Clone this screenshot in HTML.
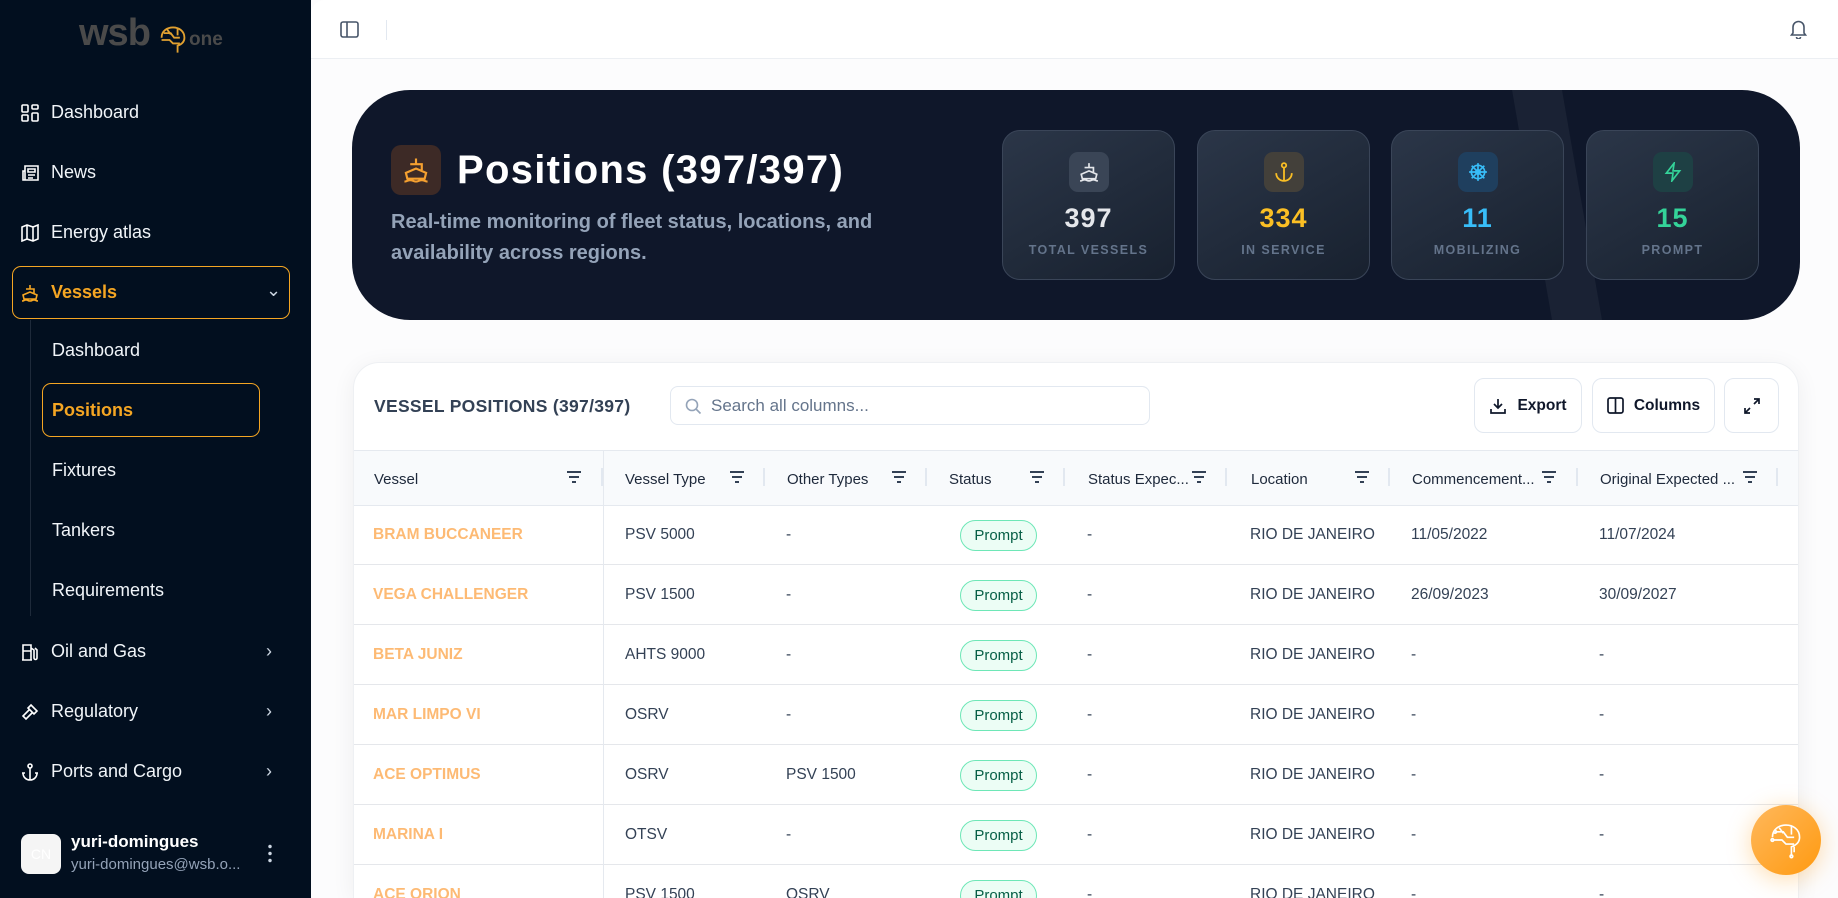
<!DOCTYPE html>
<html style="overflow:hidden;width:1838px;height:898px"><head><meta charset="utf-8"><style>
*{box-sizing:border-box;margin:0;padding:0}
body{width:1838px;height:898px;overflow:hidden;font-family:"Liberation Sans",sans-serif;background:#fcfcfd;position:relative}
.sb{position:absolute;left:0;top:0;width:311px;height:898px;background:#020f1f;color:#fff}
.nav{position:absolute;left:21px;display:flex;align-items:center;font-size:18px;color:#f1f5f9}
.nav svg{margin-right:12px}
.chev{position:absolute;left:266px;color:#cbd5e1;font-size:18px}
.sub{position:absolute;left:52px;font-size:18px;color:#f1f5f9}
.top{position:absolute;left:311px;top:0;right:0;height:59px;border-bottom:1px solid #eceff3;background:#fff;border-top-left-radius:14px}
.hero{position:absolute;left:352px;top:90px;width:1448px;height:230px;background:#0f172a;border-radius:58px;overflow:hidden}
.card{position:absolute;top:40px;width:173px;height:150px;border-radius:18px;background:linear-gradient(150deg,#2b3648,#18212f);border:1px solid #3a4558;text-align:center}
.card .ib{width:40px;height:40px;border-radius:9px;margin:21px auto 0;display:flex;align-items:center;justify-content:center}
.card .n{font-size:27px;font-weight:900;margin-top:11px;letter-spacing:1px}
.card .l{font-size:12.5px;font-weight:700;color:#64748b;letter-spacing:1.4px;margin-top:9px}
.tc{position:absolute;left:353px;top:362px;width:1446px;height:536px;background:#fff;border-radius:26px 26px 0 0;box-shadow:0 4px 24px rgba(0,0,0,.06);border:1px solid #eef0f3;border-bottom:none;overflow:hidden}
.btn{position:absolute;top:15px;height:55px;border:1px solid #e2e8f0;border-radius:10px;display:flex;align-items:center;justify-content:center;font-size:15.5px;font-weight:700;color:#0f172a;background:#fff}
.th{position:absolute;top:87px;left:0;right:0;height:56px;background:#f8fafc;border-top:1px solid #e5e9ef;border-bottom:1px solid #e5e9ef}
.h{position:absolute;top:20px;font-size:15px;color:#1e293b}
.row{position:absolute;left:0;right:0;height:60px;border-bottom:1px solid #e5e7eb}
.c{position:absolute;top:21px;font-size:15.5px;color:#334155}
.v{color:#fdba74;font-weight:700;font-size:15.5px}
.bd{position:absolute;left:606px;top:15px;width:77px;height:31px;border-radius:16px;background:#ecfdf5;border:1px solid #6ee7b7;color:#065f46;font-size:15px;display:flex;align-items:center;justify-content:center}
</style></head><body>
<div class="sb">
 <div style="position:absolute;left:79px;top:12px;font-size:38px;font-weight:900;color:#4a4a4a;letter-spacing:-1px">wsb</div>
 <svg style="position:absolute;left:157px;top:24px" width="32" height="32" viewBox="0 0 28 28" fill="none" stroke="#e0a030" stroke-width="1.6"><path d="M4 12c0-6 5-9 10-9s10 3 10 9c0 4-3 6-6 7v6M6 8h6l3 4h5M4 14h7l3 3h6M9 5l3 4M18 4v6"/></svg>
 <div style="position:absolute;left:189px;top:29px;font-size:19px;font-weight:900;color:#4a4a4a">one</div>
 <div class="nav" style="top:102px"><svg width="18" height="18" viewBox="0 0 18 18" fill="none" stroke="#fff" stroke-width="1.6"><rect x="1" y="1" width="6" height="7" rx="1"/><rect x="11" y="1" width="6" height="4" rx="1"/><rect x="1" y="11" width="6" height="6" rx="1"/><rect x="11" y="9" width="6" height="8" rx="1"/></svg>Dashboard</div>
 <div class="nav" style="top:162px"><svg width="18" height="18" viewBox="0 0 18 18" fill="none" stroke="#fff" stroke-width="1.6"><path d="M4 2h13v14H2V7h2zM4 7v9M7 5h7v3H7zM7 11h7M7 14h5"/></svg>News</div>
 <div class="nav" style="top:222px"><svg width="18" height="18" viewBox="0 0 18 18" fill="none" stroke="#fff" stroke-width="1.6"><path d="M1 3l5-2 6 2 5-2v14l-5 2-6-2-5 2zM6 1v14M12 3v14"/></svg>Energy atlas</div>
 <div style="position:absolute;left:12px;top:266px;width:278px;height:53px;border:1.5px solid #f5a623;border-radius:9px"></div>
 <div class="nav" style="top:282px;color:#f5a623;font-weight:700"><svg width="18" height="18" viewBox="0 0 18 18" fill="none" stroke="#f5a623" stroke-width="1.6"><path d="M9 1v4M5 5h8v4M2 11l7-3 7 3-1 4H3zM1 17c2 0 2-1 4-1s2 1 4 1 2-1 4-1 2 1 4 1"/></svg>Vessels</div>
 <div class="chev" style="top:280px">⌄</div>
 <div style="position:absolute;left:30px;top:320px;width:1px;height:296px;background:#1e2a3a"></div>
 <div class="sub" style="top:340px">Dashboard</div>
 <div style="position:absolute;left:42px;top:383px;width:218px;height:54px;border:1.5px solid #f5a623;border-radius:9px"></div>
 <div class="sub" style="top:400px;color:#f5a623;font-weight:700">Positions</div>
 <div class="sub" style="top:460px">Fixtures</div>
 <div class="sub" style="top:520px">Tankers</div>
 <div class="sub" style="top:580px">Requirements</div>
 <div class="nav" style="top:641px"><svg width="18" height="18" viewBox="0 0 18 18" fill="none" stroke="#fff" stroke-width="1.6"><path d="M2 17V2h8v15M1 17h10M2 8h8M10 5l3 2v8a1.5 1.5 0 003 0V7l-2-2"/></svg>Oil and Gas</div><div class="chev" style="top:641px">›</div>
 <div class="nav" style="top:701px"><svg width="18" height="18" viewBox="0 0 18 18" fill="none" stroke="#fff" stroke-width="1.6"><path d="M10 2l6 6-3 3-6-6zM8 7l-6 6 3 3 6-6"/></svg>Regulatory</div><div class="chev" style="top:701px">›</div>
 <div class="nav" style="top:761px"><svg width="18" height="18" viewBox="0 0 18 18" fill="none" stroke="#fff" stroke-width="1.6"><circle cx="9" cy="3" r="2"/><path d="M9 5v12M2 10c0 4 3 7 7 7s7-3 7-7M1 10h3M14 10h3"/></svg>Ports and Cargo</div><div class="chev" style="top:761px">›</div>
 <div style="position:absolute;left:21px;top:834px;width:40px;height:40px;border-radius:8px;background:#f5f5f5;color:#fff;font-size:14px;display:flex;align-items:center;justify-content:center">CN</div>
 <div style="position:absolute;left:71px;top:832px;font-size:17px;font-weight:700;color:#fff">yuri-domingues</div>
 <div style="position:absolute;left:71px;top:856px;font-size:15px;color:#94a3b8">yuri-domingues@wsb.o...</div>
 <div style="position:absolute;left:268px;top:843px;width:4px;height:20px;background:radial-gradient(circle,#cbd5e1 1.5px,transparent 2px) 0 0/4px 7px"></div>
</div>
<div class="top">
 <svg style="position:absolute;left:29px;top:20px" width="19" height="19" viewBox="0 0 19 19" fill="none" stroke="#475569" stroke-width="1.6"><rect x="1" y="2" width="17" height="15" rx="2"/><path d="M7 2v15"/></svg>
 <div style="position:absolute;left:75px;top:20px;width:1px;height:20px;background:#e2e8f0"></div>
 <svg style="position:absolute;left:1478px;top:19px" width="19" height="20" viewBox="0 0 19 20" fill="none" stroke="#475569" stroke-width="1.6"><path d="M4 14V8a5.5 5.5 0 0111 0v6l1.5 2h-14zM7.5 18a2 2 0 004 0"/></svg>
</div>
<div class="hero">
 <svg style="position:absolute;left:1100px;top:0" width="200" height="230"><path d="M60 0l50 0 40 230h-50z" fill="#1a2234"/></svg>
 <div style="position:absolute;left:39px;top:55px;width:50px;height:50px;border-radius:10px;background:#3d2a26;display:flex;align-items:center;justify-content:center"><svg width="26" height="26" viewBox="0 0 18 18" fill="none" stroke="#f5a030" stroke-width="1.5"><path d="M9 1v4M5 5h8v4M2 11l7-3 7 3-1 4H3zM1 17c2 0 2-1 4-1s2 1 4 1 2-1 4-1 2 1 4 1"/></svg></div>
 <div style="position:absolute;left:105px;top:58px;font-size:40px;font-weight:900;color:#fff;letter-spacing:1.3px">Positions (397/397)</div>
 <div style="position:absolute;left:39px;top:117px;font-size:20px;line-height:31px;color:#94a3b8;font-weight:700;width:580px">Real-time monitoring of fleet status, locations, and availability across regions.</div>
 <div class="card" style="left:650px"><div class="ib" style="background:#3a4556"><svg width="20" height="20" viewBox="0 0 18 18" fill="none" stroke="#e5e7eb" stroke-width="1.5"><path d="M9 1v4M5 5h8v4M2 11l7-3 7 3-1 4H3zM1 17c2 0 2-1 4-1s2 1 4 1 2-1 4-1 2 1 4 1"/></svg></div><div class="n" style="color:#e5e7eb">397</div><div class="l">TOTAL VESSELS</div></div>
 <div class="card" style="left:845px"><div class="ib" style="background:#43403a"><svg width="20" height="20" viewBox="0 0 18 18" fill="none" stroke="#fbbf24" stroke-width="1.6"><circle cx="9" cy="3" r="2"/><path d="M9 5v12M2 10c0 4 3 7 7 7s7-3 7-7"/></svg></div><div class="n" style="color:#fbbf24">334</div><div class="l">IN SERVICE</div></div>
 <div class="card" style="left:1039px"><div class="ib" style="background:#1f3f5e"><svg width="20" height="20" viewBox="0 0 18 18" fill="none" stroke="#38bdf8" stroke-width="1.5"><circle cx="9" cy="9" r="6"/><circle cx="9" cy="9" r="2"/><path d="M9 1v16M1 9h16M3.3 3.3l11.4 11.4M14.7 3.3L3.3 14.7"/></svg></div><div class="n" style="color:#38bdf8">11</div><div class="l">MOBILIZING</div></div>
 <div class="card" style="left:1234px"><div class="ib" style="background:#1e4044"><svg width="20" height="20" viewBox="0 0 18 18" fill="none" stroke="#34d399" stroke-width="1.5"><path d="M10 1L3 10h6l-1 7 7-9H9z"/></svg></div><div class="n" style="color:#34d399">15</div><div class="l">PROMPT</div></div>
</div>
<div class="tc">
 <div style="position:absolute;left:20px;top:33px;font-size:17.5px;font-weight:700;color:#334155;letter-spacing:.3px">VESSEL POSITIONS (397/397)</div>
 <div style="position:absolute;left:316px;top:23px;width:480px;height:39px;border:1px solid #e2e8f0;border-radius:8px"><svg style="position:absolute;left:14px;top:11px" width="17" height="17" viewBox="0 0 17 17" fill="none" stroke="#94a3b8" stroke-width="1.6"><circle cx="7" cy="7" r="5.5"/><path d="M11 11l4.5 4.5"/></svg><span style="position:absolute;left:40px;top:9px;font-size:17px;color:#64748b">Search all columns...</span></div>
 <div class="btn" style="left:1120px;width:108px"><svg style="margin-right:10px" width="18" height="18" viewBox="0 0 18 18" fill="none" stroke="#0f172a" stroke-width="1.7"><path d="M9 2v9M5 7l4 4 4-4M2 12v4h14v-4"/></svg>Export</div>
 <div class="btn" style="left:1238px;width:123px"><svg style="margin-right:10px" width="17" height="17" viewBox="0 0 17 17" fill="none" stroke="#0f172a" stroke-width="1.7"><rect x="1" y="1" width="15" height="15" rx="2"/><path d="M8.5 1v15"/></svg>Columns</div>
 <div class="btn" style="left:1370px;width:55px"><svg width="18" height="18" viewBox="0 0 18 18" fill="none" stroke="#0f172a" stroke-width="1.7"><path d="M11 2h5v5M16 2l-5 5M7 16H2v-5M2 16l5-5"/></svg></div>
 <div class="th">
  <div class="h" style="left:20px">Vessel</div><div class="h" style="left:271px">Vessel Type</div><div class="h" style="left:433px">Other Types</div><div class="h" style="left:595px">Status</div><div class="h" style="left:734px">Status Expec...</div><div class="h" style="left:897px">Location</div><div class="h" style="left:1058px">Commencement...</div><div class="h" style="left:1246px">Original Expected ...</div>
 </div>
 <div style="position:absolute;left:249px;top:87px;width:1px;height:480px;background:#e5e9ef"></div>
</div>
<div style="position:absolute;left:353px;top:449px;width:1446px">
<svg width="1446" height="56" style="position:absolute;top:0;left:0">
<g stroke="#334155" stroke-width="2"><path d="M214 23h14M216 28h10M219 33h4"/><path d="M377 23h14M379 28h10M382 33h4"/><path d="M539 23h14M541 28h10M544 33h4"/><path d="M677 23h14M679 28h10M682 33h4"/><path d="M839 23h14M841 28h10M844 33h4"/><path d="M1002 23h14M1004 28h10M1007 33h4"/><path d="M1189 23h14M1191 28h10M1194 33h4"/><path d="M1390 23h14M1392 28h10M1395 33h4"/></g>
<g fill="#e2e8f0"><rect x="248" y="19" width="2" height="18"/><rect x="410" y="19" width="2" height="18"/><rect x="572" y="19" width="2" height="18"/><rect x="710" y="19" width="2" height="18"/><rect x="872" y="19" width="2" height="18"/><rect x="1035" y="19" width="2" height="18"/><rect x="1223" y="19" width="2" height="18"/><rect x="1423" y="19" width="2" height="18"/></g>
</svg>
</div>
<div style="position:absolute;left:354px;top:505px;width:1444px;height:393px;overflow:hidden">
 <div class="row" style="top:0"><div class="c v" style="left:19px">BRAM BUCCANEER</div><div class="c" style="left:271px">PSV 5000</div><div class="c" style="left:432px">-</div><div class="bd">Prompt</div><div class="c" style="left:733px">-</div><div class="c" style="left:896px">RIO DE JANEIRO</div><div class="c" style="left:1057px">11/05/2022</div><div class="c" style="left:1245px">11/07/2024</div></div>
 <div class="row" style="top:60px"><div class="c v" style="left:19px">VEGA CHALLENGER</div><div class="c" style="left:271px">PSV 1500</div><div class="c" style="left:432px">-</div><div class="bd">Prompt</div><div class="c" style="left:733px">-</div><div class="c" style="left:896px">RIO DE JANEIRO</div><div class="c" style="left:1057px">26/09/2023</div><div class="c" style="left:1245px">30/09/2027</div></div>
 <div class="row" style="top:120px"><div class="c v" style="left:19px">BETA JUNIZ</div><div class="c" style="left:271px">AHTS 9000</div><div class="c" style="left:432px">-</div><div class="bd">Prompt</div><div class="c" style="left:733px">-</div><div class="c" style="left:896px">RIO DE JANEIRO</div><div class="c" style="left:1057px">-</div><div class="c" style="left:1245px">-</div></div>
 <div class="row" style="top:180px"><div class="c v" style="left:19px">MAR LIMPO VI</div><div class="c" style="left:271px">OSRV</div><div class="c" style="left:432px">-</div><div class="bd">Prompt</div><div class="c" style="left:733px">-</div><div class="c" style="left:896px">RIO DE JANEIRO</div><div class="c" style="left:1057px">-</div><div class="c" style="left:1245px">-</div></div>
 <div class="row" style="top:240px"><div class="c v" style="left:19px">ACE OPTIMUS</div><div class="c" style="left:271px">OSRV</div><div class="c" style="left:432px">PSV 1500</div><div class="bd">Prompt</div><div class="c" style="left:733px">-</div><div class="c" style="left:896px">RIO DE JANEIRO</div><div class="c" style="left:1057px">-</div><div class="c" style="left:1245px">-</div></div>
 <div class="row" style="top:300px"><div class="c v" style="left:19px">MARINA I</div><div class="c" style="left:271px">OTSV</div><div class="c" style="left:432px">-</div><div class="bd">Prompt</div><div class="c" style="left:733px">-</div><div class="c" style="left:896px">RIO DE JANEIRO</div><div class="c" style="left:1057px">-</div><div class="c" style="left:1245px">-</div></div>
 <div class="row" style="top:360px"><div class="c v" style="left:19px">ACE ORION</div><div class="c" style="left:271px">PSV 1500</div><div class="c" style="left:432px">OSRV</div><div class="bd">Prompt</div><div class="c" style="left:733px">-</div><div class="c" style="left:896px">RIO DE JANEIRO</div><div class="c" style="left:1057px">-</div><div class="c" style="left:1245px">-</div></div>
 <div style="position:absolute;left:249px;top:0;width:1px;height:400px;background:#e5e9ef"></div>
</div>
<div style="position:absolute;left:1751px;top:805px;width:70px;height:70px;border-radius:50%;background:linear-gradient(135deg,#ffb85c,#ff9a10);box-shadow:0 4px 24px rgba(255,154,16,.35);display:flex;align-items:center;justify-content:center">
 <svg width="38" height="38" viewBox="0 0 28 28" fill="none" stroke="#fff" stroke-width="1.2"><path d="M4 12c0-6 5-9 10-9s10 3 10 9c0 4-3 6-6 7v7M6 8h6l3 4h5M4 14h7l3 3h6M9 5l3 4M18 4v6M20 19v4"/><circle cx="6" cy="8" r="1"/><circle cx="4" cy="14" r="1"/><circle cx="18" cy="26" r="1"/></svg>
</div>
</body></html>
